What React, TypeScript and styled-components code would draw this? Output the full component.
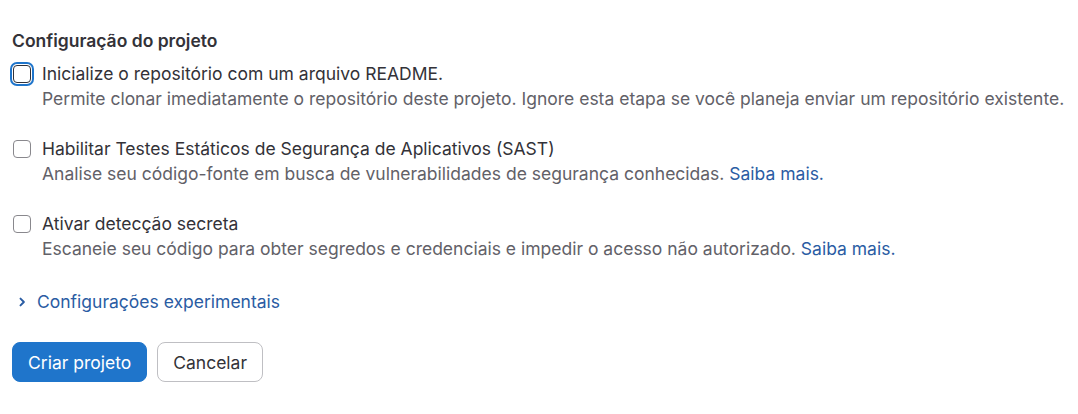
import React from "react";
import styled, { createGlobalStyle } from "styled-components";

const Global = createGlobalStyle`
  html, body { margin: 0; padding: 0; background: #fff; }
  body { font-family: Inter, "Noto Sans", sans-serif; color: #333238; -webkit-font-smoothing: antialiased; }
`;

const Page = styled.div`
  padding: 28px 0 0 12px;
  display: flex;
  flex-direction: column;
`;

const Heading = styled.h3`
  margin: 0 0 8px 0;
  font-size: 17.5px;
  font-weight: 600;
  line-height: 25px;
  color: #333238;
`;

const Options = styled.div`
  display: flex;
  flex-direction: column;
  gap: 25px;
`;

const Option = styled.label`
  display: grid;
  grid-template-columns: 20px 1fr;
  column-gap: 10px;
  align-items: start;
  cursor: pointer;
`;

const Box = styled.span<{ $focused?: boolean }>`
  box-sizing: border-box;
  width: 18px;
  height: 18px;
  margin: 3.5px 0 0 1px;
  border: 1px solid ${(p) => (p.$focused ? "#333238" : "#89888d")};
  border-radius: 4px;
  background: #fff;
  box-shadow: ${(p) => (p.$focused ? "0 0 0 1px #fff, 0 0 0 3px #1f75cb" : "none")};
`;

const Texts = styled.div`
  display: flex;
  flex-direction: column;
  white-space: nowrap;
`;

const Title = styled.span`
  font-size: 17.5px;
  line-height: 25px;
  color: #333238;
`;

const Desc = styled.span`
  font-size: 17.5px;
  line-height: 25px;
  color: #626168;
`;

const Link = styled.a`
  color: #2a5ca3;
  text-decoration: none;
`;

const Toggle = styled.button`
  margin-top: 28px;
  align-self: flex-start;
  display: flex;
  align-items: center;
  gap: 9px;
  background: none;
  border: none;
  padding: 0 0 0 4px;
  font-family: inherit;
  font-size: 17.5px;
  line-height: 25px;
  color: #2a5ca3;
  cursor: pointer;
`;

const Actions = styled.div`
  margin-top: 28px;
  display: flex;
  gap: 10px;
`;

const Button = styled.button<{ $primary?: boolean }>`
  box-sizing: border-box;
  height: 40px;
  padding: 0 15px;
  border-radius: 8px;
  font-family: inherit;
  font-size: 17.5px;
  font-weight: 400;
  cursor: pointer;
  background: ${(p) => (p.$primary ? "#1f75cb" : "#fff")};
  color: ${(p) => (p.$primary ? "#fff" : "#333238")};
  border: 1px solid ${(p) => (p.$primary ? "#1f75cb" : "#bfbfc3")};
`;

const options = [
  {
    title: "Inicialize o repositório com um arquivo README.",
    desc: "Permite clonar imediatamente o repositório deste projeto. Ignore esta etapa se você planeja enviar um repositório existente.",
    link: false,
    focused: true,
  },
  {
    title: "Habilitar Testes Estáticos de Segurança de Aplicativos (SAST)",
    desc: "Analise seu código-fonte em busca de vulnerabilidades de segurança conhecidas.",
    link: true,
    focused: false,
  },
  {
    title: "Ativar detecção secreta",
    desc: "Escaneie seu código para obter segredos e credenciais e impedir o acesso não autorizado.",
    link: true,
    focused: false,
  },
];

export default function App() {
  return (
    <>
      <Global />
      <Page>
        <Heading>Configuração do projeto</Heading>
        <Options>
          {options.map((o) => (
            <Option key={o.title}>
              <Box $focused={o.focused} />
              <Texts>
                <Title>{o.title}</Title>
                <Desc>
                  {o.desc}
                  {o.link && (
                    <>
                      {" "}
                      <Link href="#">Saiba mais.</Link>
                    </>
                  )}
                </Desc>
              </Texts>
            </Option>
          ))}
        </Options>
        <Toggle>
          <svg width="12" height="12" viewBox="0 0 16 16" fill="none">
            <path d="M6 3.5L10.5 8L6 12.5" stroke="#2a5ca3" strokeWidth="2.6" strokeLinecap="round" strokeLinejoin="round" />
          </svg>
          Configurações experimentais
        </Toggle>
        <Actions>
          <Button $primary>Criar projeto</Button>
          <Button>Cancelar</Button>
        </Actions>
      </Page>
    </>
  );
}
